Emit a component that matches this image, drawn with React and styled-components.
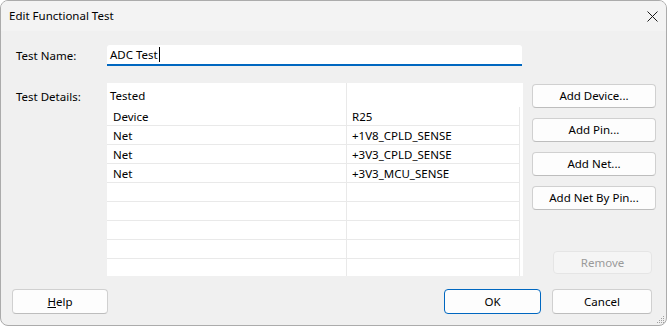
import React from 'react';
import styled, { createGlobalStyle } from 'styled-components';

const Global = createGlobalStyle`
  html, body { margin: 0; padding: 0; background: #ffffff; }
  #root { width: 667px; height: 326px; }
  *, *::before, *::after { box-sizing: border-box; }
`;

const font = `"Noto Sans", "Liberation Sans", sans-serif`;

const Window = styled.div`
  position: relative;
  width: 667px;
  height: 326px;
  border: 1px solid #ababab;
  border-radius: 8px;
  background: #f0f0f0;
  overflow: hidden;
  display: flex;
  flex-direction: column;
  font-family: ${font};
  font-size: 11.5px;
  color: #000;
`;

const TitleBar = styled.div`
  flex: none;
  height: 30px;
  display: flex;
  align-items: center;
  justify-content: space-between;
  background: #f3f3f3;
  padding-left: 8px;
`;

const Title = styled.span`
  line-height: 16px;
`;

const CloseButton = styled.div`
  width: 28px;
  height: 30px;
  display: flex;
  align-items: center;
  justify-content: center;
`;

const Body = styled.div`
  flex: 1;
  display: flex;
  flex-direction: column;
  padding: 14px 10px 11px 11px;
`;

const FieldRow = styled.div`
  display: flex;
  align-items: ${(p) => (p.$top ? 'flex-start' : 'center')};
  height: ${(p) => p.$h}px;
  margin-top: ${(p) => p.$mt || 0}px;
`;

const Label = styled.div`
  flex: none;
  width: 95px;
  padding-left: 4px;
  padding-top: ${(p) => p.$pt || 0}px;
  line-height: 16px;
`;

const TextInput = styled.div`
  width: 415px;
  height: 21px;
  background: #fff;
  border-radius: 3px 3px 0 0;
  border-bottom: 2px solid #0067c0;
  display: flex;
  align-items: center;
  padding-left: 3px;
  line-height: 16px;
`;

const Caret = styled.span`
  display: inline-block;
  width: 1px;
  height: 15px;
  background: #000;
  margin-left: 1px;
`;

const Table = styled.div`
  width: 416px;
  height: 193px;
  background: #fff;
  overflow: hidden;
  flex: none;
`;

const HeaderRow = styled.div`
  display: flex;
  height: 24px;
  align-items: stretch;
`;

const HeaderCell = styled.div`
  width: ${(p) => (p.$first ? '240px' : 'auto')};
  flex: ${(p) => (p.$first ? 'none' : '1')};
  border-right: ${(p) => (p.$first ? '1px solid #e9e9e9' : 'none')};
  padding-left: 3px;
  display: flex;
  align-items: center;
`;

const DataRow = styled.div`
  display: flex;
  width: 413px;
  height: 19px;
  border-right: 1px solid #e9e9e9;
  border-bottom: 1px solid #e9e9e9;
`;

const Cell = styled.div`
  width: ${(p) => (p.$first ? '240px' : 'auto')};
  flex: ${(p) => (p.$first ? 'none' : '1')};
  border-right: ${(p) => (p.$first ? '1px solid #e9e9e9' : 'none')};
  padding-left: ${(p) => (p.$first ? 6 : 5)}px;
  display: flex;
  align-items: center;
  white-space: nowrap;
`;

const SideButtons = styled.div`
  margin-left: 9px;
  width: 124px;
  height: 100%;
  display: flex;
  flex-direction: column;
  gap: 10px;
  padding-top: 1px;
`;

const Button = styled.div`
  flex: none;
  width: ${(p) => p.$w || 124}px;
  height: ${(p) => p.$h || 24}px;
  display: flex;
  align-items: center;
  justify-content: center;
  background: #fdfdfd;
  border: 1px solid ${(p) => (p.$primary ? '#0067c0' : '#d0d0d0')};
  border-bottom-color: ${(p) => (p.$primary ? '#0067c0' : '#bdbdbd')};
  border-radius: 4px;
  line-height: 16px;
  color: #000;
`;

const DisabledButton = styled(Button)`
  margin-top: auto;
  margin-bottom: 2px;
  align-self: flex-end;
  margin-right: 4px;
  background: #f5f5f5;
  border-color: #e5e5e5;
  color: #9a9a9a;
`;

const Footer = styled.div`
  margin-top: 13px;
  display: flex;
  align-items: center;
  height: 25px;
`;

const Spacer = styled.div`
  flex: 1;
`;

const CancelButton = styled(Button)`
  margin-left: 11px;
  margin-right: 4px;
`;

const Grip = styled.svg`
  position: absolute;
  right: 1px;
  bottom: 1px;
`;

const rows = [
  ['Device', 'R25'],
  ['Net', '+1V8_CPLD_SENSE'],
  ['Net', '+3V3_CPLD_SENSE'],
  ['Net', '+3V3_MCU_SENSE'],
  ['', ''],
  ['', ''],
  ['', ''],
  ['', ''],
  ['', ''],
];

export default function App() {
  return (
    <>
      <Global />
      <Window>
        <TitleBar>
          <Title>Edit Functional Test</Title>
          <CloseButton>
            <svg width="11" height="11" viewBox="0 0 11 11">
              <path d="M0.5 0.5 L10.5 10.5 M10.5 0.5 L0.5 10.5" stroke="#1a1a1a" strokeWidth="1" fill="none" />
            </svg>
          </CloseButton>
        </TitleBar>
        <Body>
          <FieldRow $h={21}>
            <Label>Test Name:</Label>
            <TextInput>
              ADC Test<Caret />
            </TextInput>
          </FieldRow>
          <FieldRow $h={193} $mt={17} $top>
            <Label $pt={6}>Test Details:</Label>
            <Table>
              <HeaderRow>
                <HeaderCell $first>Tested</HeaderCell>
                <HeaderCell />
              </HeaderRow>
              {rows.map((r, i) => (
                <DataRow key={i}>
                  <Cell $first>{r[0]}</Cell>
                  <Cell>{r[1]}</Cell>
                </DataRow>
              ))}
            </Table>
            <SideButtons>
              <Button>Add Device...</Button>
              <Button>Add Pin...</Button>
              <Button>Add Net...</Button>
              <Button>Add Net By Pin...</Button>
              <DisabledButton $w={99} $h={23}>Remove</DisabledButton>
            </SideButtons>
          </FieldRow>
          <Footer>
            <Button $w={96} $h={25}>
              <span><u>H</u>elp</span>
            </Button>
            <Spacer />
            <Button $w={97} $h={25} $primary>OK</Button>
            <CancelButton $w={100} $h={25}>Cancel</CancelButton>
          </Footer>
        </Body>
        <Grip width="8" height="8" viewBox="0 0 8 8">
          {[[6, 0], [6, 2], [4, 2], [6, 4], [4, 4], [2, 4], [6, 6], [4, 6], [2, 6], [0, 6]].map(([x, y], i) => (
            <rect key={i} x={x} y={y} width="1" height="1" fill="#a0a0a0" />
          ))}
        </Grip>
      </Window>
    </>
  );
}
